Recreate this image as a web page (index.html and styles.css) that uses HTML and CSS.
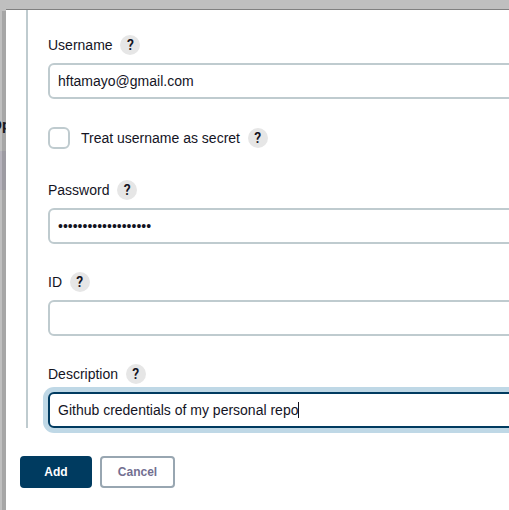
FILE: index.html
```html
<!DOCTYPE html>
<html lang="en">
<head>
<meta charset="utf-8">
<title>Add Credentials</title>
<link rel="stylesheet" href="styles.css">
</head>
<body>
<div class="backdrop"><span class="behind-text">Op</span><span class="behind-row"></span></div>
<div class="shade"></div>
<main class="dialog">
  <form class="fields">
    <div class="field">
      <div class="label">Username<span class="help">?</span></div>
      <div class="input">hftamayo@gmail.com</div>
    </div>
    <div class="check">
      <span class="box"></span>
      <div class="label">Treat username as secret<span class="help">?</span></div>
    </div>
    <div class="field">
      <div class="label">Password<span class="help">?</span></div>
      <div class="input">•••••••••••••••••••</div>
    </div>
    <div class="field">
      <div class="label">ID<span class="help">?</span></div>
      <div class="input"></div>
    </div>
    <div class="field">
      <div class="label">Description<span class="help">?</span></div>
      <div class="input focused">Github credentials of my personal repo<span class="caret"></span></div>
    </div>
  </form>
  <div class="actions">
    <span class="btn primary">Add</span>
    <span class="btn">Cancel</span>
  </div>
</main>
</body>
</html>
```

FILE: styles.css
```css
* { box-sizing: border-box; }
body {
  margin: 0;
  height: 510px;
  padding: 9px 0 0 6px;
  overflow: hidden;
  position: relative;
  background: #bfbfbf;
  color: #14141f;
  font: 14px/20px "Liberation Sans", Arial, sans-serif;
}
.backdrop, .shade { position: absolute; left: 0; }
.backdrop { top: 0; width: 6px; height: 510px; overflow: hidden; }
.behind-text {
  position: absolute;
  right: -4.5px;
  top: 115px;
  color: #18181b;
  font-weight: bold;
}
.behind-row {
  position: absolute;
  left: 0;
  top: 151px;
  width: 6px;
  height: 39px;
  background: #b5b2bb;
}
.shade {
  left: 2px;
  top: 11px;
  width: 4px;
  height: 499px;
  background: rgba(0, 0, 0, 0.13);
}
.dialog {
  position: relative;
  height: 501px;
  overflow: hidden;
  background: #fff;
  border-top: 1px solid #808080;
}
.fields {
  height: 418px;
  margin-left: 20px;
  padding: 25px 0 0 20px;
  border-left: 2px solid #bfcbcf;
}
.field { height: 92px; }
.label {
  display: flex;
  align-items: center;
  gap: 7.5px;
  height: 20px;
  white-space: nowrap;
}
.help {
  width: 20px;
  height: 20px;
  padding-left: 0.5px;
  border-radius: 50%;
  background: #e6e6e6;
  font-family: Roboto, sans-serif;
  font-size: 14px;
  line-height: 20px;
  font-weight: 600;
  text-align: center;
}
.input {
  display: flex;
  align-items: center;
  height: 36px;
  margin: 8px -10px 0 0;
  padding: 0 8px;
  background: #fff;
  border: 2px solid #bfcbcf;
  border-radius: 6px;
}
.focused {
  border-color: #003b60;
  box-shadow: 0 0 0 5px #bfd8e6;
}
.caret { width: 1px; height: 16px; background: #14141f; }
.check {
  display: flex;
  align-items: center;
  gap: 11px;
  height: 22px;
  margin-bottom: 31px;
}
.box {
  width: 22px;
  height: 22px;
  border: 2px solid #bfcbcf;
  border-radius: 6px;
}
.actions {
  display: flex;
  gap: 8px;
  margin: 28px 0 0 14px;
}
.btn {
  width: 75px;
  height: 32px;
  border: 2px solid #98a6b1;
  border-radius: 4px;
  color: #736f91;
  font-size: 12px;
  line-height: 28px;
  font-weight: bold;
  text-align: center;
}
.primary {
  width: 72px;
  background: #003b60;
  border-color: #003b60;
  color: #fff;
}
```
